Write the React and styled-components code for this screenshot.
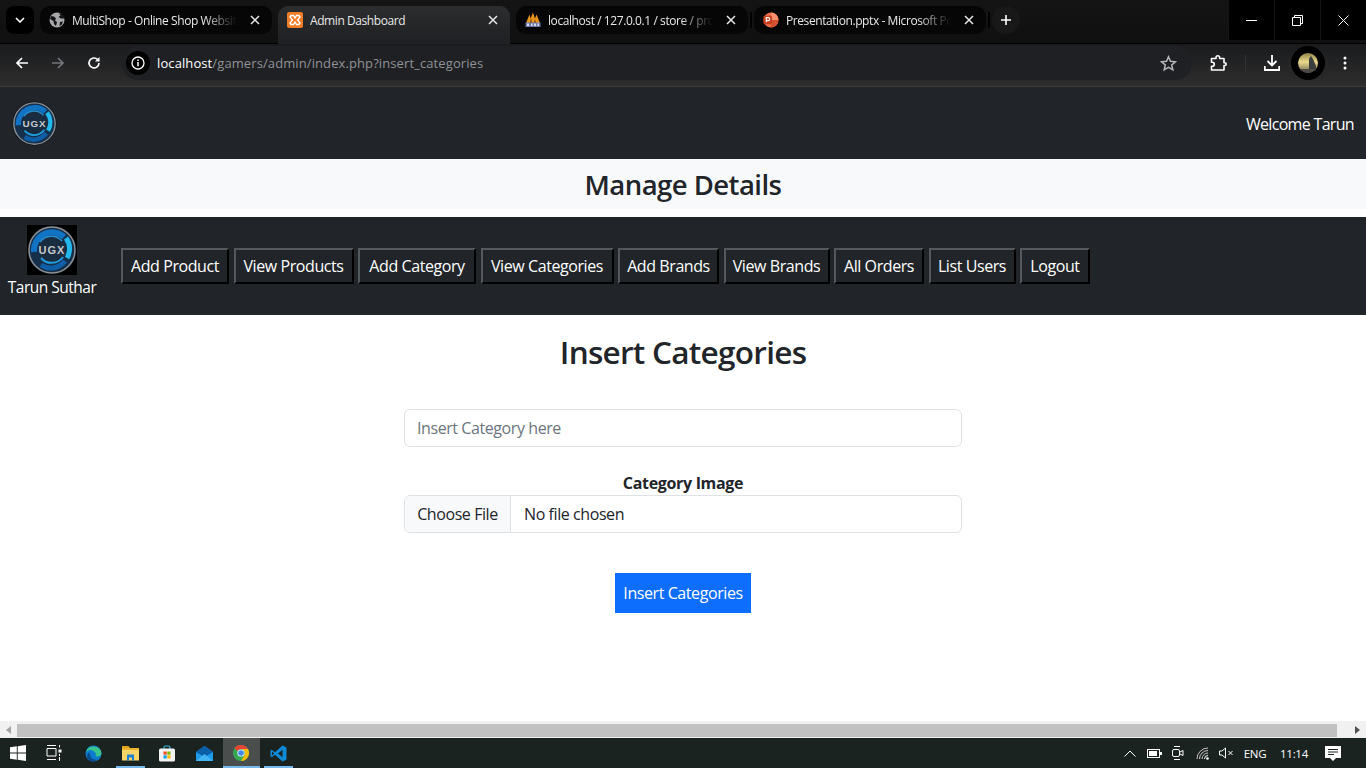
import React from "react";
import styled, { createGlobalStyle } from "styled-components";

const GlobalStyle = createGlobalStyle`
  html, body {
    margin: 0;
    height: 100%;
    overflow: hidden;
    font-family: "Open Sans", "Noto Sans", "Liberation Sans", sans-serif;
  }
  * { box-sizing: border-box; }
`;

const Screen = styled.div`
  display: flex;
  flex-direction: column;
  width: 1366px;
  height: 768px;
  background: #fff;
`;

// browser chrome
const TabStrip = styled.div`
  display: flex;
  align-items: flex-start;
  height: 44px;
  background: linear-gradient(#141414, #101010);
  border-bottom: 1px solid #000;
  color: #e6e6e6;
`;

const TabMenu = styled.div`
  display: flex;
  align-items: center;
  justify-content: center;
  width: 28px;
  height: 28px;
  margin: 6px 0 0 6px;
  border-radius: 8px;
  background: #000;
`;

const Tabs = styled.div`
  display: flex;
  gap: 6px;
  margin: 6px 0 0 6px;
`;

const Tab = styled.div`
  position: relative;
  display: flex;
  align-items: center;
  gap: 7px;
  width: 232px;
  height: ${({ $active }) => ($active ? "38px" : "28px")};
  padding: ${({ $active }) => ($active ? "0 12px 10px 9px" : "0 12px 0 9px")};
  border-radius: ${({ $active }) => ($active ? "10px 10px 0 0" : "10px")};
  background: ${({ $active }) =>
    $active ? "linear-gradient(#2c2d2e, #1f2023)" : "#060606"};

  &::after {
    content: "";
    display: ${({ $divider }) => ($divider ? "block" : "none")};
    position: absolute;
    right: -4px;
    top: 6px;
    width: 2px;
    height: 16px;
    background: #000;
  }
`;

const TabTitle = styled.span`
  flex: 1;
  overflow: hidden;
  margin-right: ${({ $active }) => ($active ? 0 : "6px")};
  white-space: nowrap;
  font-size: 12px;
  letter-spacing: -0.42px;
  color: #e8e8e8;
  mask-image: ${({ $active }) =>
    $active ? "none" : "linear-gradient(90deg, #000 80%, transparent 100%)"};
`;

const NewTab = styled.div`
  display: flex;
  align-items: center;
  justify-content: center;
  width: 28px;
  height: 28px;
  margin: 6px 0 0 6px;
  border-radius: 50%;
  background: #181818;
`;

const WindowButtons = styled.div`
  display: flex;
  height: 40px;
  margin-left: auto;
  background: #000;
`;

const WindowButton = styled.div`
  display: flex;
  align-items: center;
  justify-content: center;
  width: 46px;
  border-left: 1px solid #141414;
`;

const Toolbar = styled.div`
  display: flex;
  align-items: flex-start;
  height: 43px;
  padding-top: 2px;
  background: linear-gradient(#1a1b1d, #2d2d2d);
  border-bottom: 1px solid #3a3a3a;
`;

const NavIcons = styled.div`
  display: flex;
  align-items: center;
  gap: 22px;
  height: 34px;
  margin: 0 20px 0 15px;
`;

const AddressBar = styled.div`
  display: flex;
  align-items: center;
  width: 1071px;
  height: 34px;
  padding: 0 15px 0 5px;
  border-radius: 17px;
  background: #1f2023;
`;

const InfoBadge = styled.div`
  display: flex;
  align-items: center;
  justify-content: center;
  width: 24px;
  height: 24px;
  margin-right: 7px;
  border-radius: 50%;
  background: #000;
`;

const Url = styled.div`
  flex: 1;
  font-size: 13px;
  letter-spacing: 0.1px;
  color: #8f9297;

  b {
    font-weight: 400;
    color: #fff;
  }
`;

const ToolbarRight = styled.div`
  display: flex;
  align-items: center;
  height: 34px;
  margin-left: 17px;
`;

const Avatar = styled.div`
  display: flex;
  align-items: center;
  justify-content: center;
  width: 34px;
  height: 34px;
  margin: 0 18px 0 11px;
  border-radius: 50%;
  background: #000;
`;

const ToolbarDivider = styled.div`
  width: 1px;
  height: 16px;
  margin: 0 18px;
  background: #333;
`;

// page
const Page = styled.main`
  flex: 1;
  overflow: hidden;
`;

const TopBar = styled.header`
  display: flex;
  align-items: center;
  justify-content: space-between;
  height: 72px;
  padding: 0 12px;
  background: #212529;
  color: #fff;
  font-size: 16px;
`;

const Welcome = styled.span`
  margin-top: 2px;
  letter-spacing: -0.68px;
`;

const ManageBand = styled.div`
  height: 50px;
  margin-bottom: 8px;
  background: #f8f9fa;
  color: #212529;
  font-size: 27.5px;
  font-weight: 600;
  line-height: 52px;
  letter-spacing: -0.54px;
  text-align: center;
`;

const AdminNav = styled.nav`
  display: flex;
  align-items: center;
  height: 98px;
  padding: 0 0 0 8px;
  background: #212529;
  color: #fff;
`;

const Profile = styled.div`
  display: flex;
  flex-direction: column;
  align-items: center;
  align-self: flex-start;
  width: 88px;
  margin-right: 25px;
  padding-top: 8px;
  font-size: 15.5px;
  line-height: 22px;
  letter-spacing: -0.5px;
  white-space: nowrap;
`;

const ProfileImage = styled.div`
  width: 50px;
  height: 50px;
  margin-bottom: 1px;
  background: #000;
`;

const NavButtons = styled.div`
  display: flex;
  gap: 4.5px;
`;

const NavButton = styled.button`
  width: ${({ $width }) => $width}px;
  height: 36px;
  padding: 0;
  border: 2px solid;
  border-color: #55585c #000 #000 #55585c;
  background: #212529;
  color: #fff;
  font: inherit;
  font-size: 16px;
  letter-spacing: -0.42px;
`;

const Content = styled.section`
  display: flex;
  flex-direction: column;
  align-items: center;
  color: #212529;
`;

const Heading = styled.h2`
  margin: 16px 0 36px;
  font-size: 31.5px;
  font-weight: 600;
  line-height: 42px;
  letter-spacing: -0.72px;
`;

const Form = styled.form`
  display: flex;
  flex-direction: column;
  align-items: center;
  width: 558px;
`;

const TextInput = styled.input`
  width: 100%;
  height: 38px;
  margin-bottom: 25px;
  padding: 0 12px;
  border: 1px solid #dee2e6;
  border-radius: 6px;
  font: inherit;
  font-size: 16px;
  letter-spacing: -0.42px;

  &::placeholder {
    color: #6c757d;
    opacity: 1;
  }
`;

const Label = styled.label`
  font-size: 16px;
  font-weight: 700;
  line-height: 23px;
  letter-spacing: -0.32px;
`;

const FileRow = styled.div`
  display: flex;
  align-items: stretch;
  width: 100%;
  height: 38px;
  margin-bottom: 40px;
  border: 1px solid #dee2e6;
  border-radius: 6px;
  overflow: hidden;
  font-size: 16px;
  letter-spacing: -0.42px;
`;

const FileButton = styled.div`
  display: flex;
  align-items: center;
  justify-content: center;
  width: 106px;
  border-right: 1px solid #dee2e6;
  background: #f8f9fa;
`;

const FileName = styled.div`
  display: flex;
  align-items: center;
  padding-left: 13px;
`;

const SubmitButton = styled.button`
  width: 136px;
  height: 40px;
  padding: 0;
  border: 0;
  background: #0d6efd;
  color: #fff;
  font: inherit;
  font-size: 16px;
  letter-spacing: -0.42px;
`;

// scrollbar + taskbar
const ScrollBar = styled.div`
  display: flex;
  align-items: center;
  height: 17px;
  padding-top: 1px;
  background: #f1f1f1;
`;

const ScrollArrow = styled.div`
  display: flex;
  align-items: center;
  justify-content: center;
  flex: 0 0 17px;
`;

const ScrollThumb = styled.div`
  width: 1320px;
  height: 13px;
  background: #c1c1c1;
`;

const ScrollTrack = styled.div`
  flex: 1;
`;

const Taskbar = styled.footer`
  display: flex;
  align-items: center;
  height: 30px;
  background: #1b2321;
  color: #fff;
`;

const TaskItem = styled.div`
  position: relative;
  display: flex;
  align-items: center;
  justify-content: center;
  width: ${({ $width }) => $width || 37}px;
  height: 30px;
  background: ${({ $active }) => ($active ? "#4a4f4e" : "transparent")};

  &::after {
    content: "";
    display: ${({ $open }) => ($open ? "block" : "none")};
    position: absolute;
    left: ${({ $active }) => ($active ? 0 : "4px")};
    right: ${({ $active }) => ($active ? 0 : "4px")};
    bottom: 0;
    height: 2px;
    background: #76b9ed;
  }
`;

const Tray = styled.div`
  display: flex;
  align-items: center;
  margin-left: auto;
  height: 30px;
`;

const TrayIcon = styled.div`
  display: flex;
  align-items: center;
  justify-content: center;
  width: ${({ $width }) => $width || 24}px;
`;

const TrayText = styled.span`
  width: ${({ $width }) => $width}px;
  font-size: 11.5px;
  letter-spacing: -0.3px;
  text-align: center;
  color: #fff;
`;

const CloseIcon = () => (
  <svg width="10" height="10" viewBox="0 0 10 10">
    <path d="M1 1l8 8M9 1l-8 8" stroke="#e8e8e8" strokeWidth="1.5" />
  </svg>
);

const GlobeIcon = () => (
  <svg width="16" height="16" viewBox="0 0 16 16">
    <circle cx="8" cy="8" r="7.5" fill="#a6a8ab" />
    <path d="M2 4l3 .5 2 2-1 2 2 1.5-1 4-2-2-.5-3L1 7zM10 1.5l1.5 2-2 1.5 2.5 1.5 3 0 .5-2-2.5-3zM11 10l3-.5-1.5 3.5-2 1z" fill="#141414" />
  </svg>
);

const XamppIcon = () => (
  <svg width="16" height="16" viewBox="0 0 16 16">
    <rect width="16" height="16" rx="2" fill="#f07c26" />
    <path d="M4 3.500h2.500L8 6l1.500-2.500H12l1 1.500-2.500 3 2.500 3-1 1.500H9.500L8 10l-1.500 2.500H4L3 11l2.500-3L3 5z" fill="none" stroke="#fff" strokeWidth="1.400" />
  </svg>
);

const PmaIcon = () => (
  <svg width="16" height="16" viewBox="0 0 16 16">
    <path d="M1 11L4.500 2.500l1 4L8 .5l2 6 1.500-4L15 11z" fill="#e8931c" />
    <path d="M5 11l1-5 1 5zM9 11l1-4 1 4z" fill="#7a3f08" />
    <rect x="0.500" y="10.500" width="15" height="4.500" fill="#6c78ab" />
    <path d="M2 11.500h2v2.500H2zM6 11.500h1.500V14H6zM9 11.500h2V14H9zM12.500 11.500H14V14h-1.500z" fill="#d8dcec" />
  </svg>
);

const PptIcon = () => (
  <svg width="16" height="16" viewBox="0 0 17 17">
    <circle cx="8.500" cy="8.500" r="8" fill="#ed6c47" />
    <path d="M8.500.5a8 8 0 0 1 8 8h-8z" fill="#ff8f6b" />
    <path d="M8.500 16.500a8 8 0 0 0 8-8h-8z" fill="#d35230" />
    <rect x="0.500" y="4" width="9" height="9" rx="1" fill="#c43e1c" />
    <path d="M3.500 11V6h2a1.500 1.500 0 0 1 0 3.200h-2" fill="none" stroke="#fff" strokeWidth="1.200" />
  </svg>
);

const BackIcon = ({ color = "#fff", flip }) => (
  <svg width="14" height="14" viewBox="0 0 14 14" style={flip ? { transform: "scaleX(-1)" } : undefined}>
    <path d="M13 7H2M7 2L2 7l5 5" fill="none" stroke={color} strokeWidth="1.700" />
  </svg>
);

const ReloadIcon = () => (
  <svg width="14" height="14" viewBox="0 0 14 14">
    <path d="M12 7a5 5 0 1 1-1.500-3.600L12 5" fill="none" stroke="#fff" strokeWidth="1.600" />
    <path d="M12.500 1v4.500H8z" fill="#fff" />
  </svg>
);

const InfoIcon = () => (
  <svg width="14" height="14" viewBox="0 0 14 14">
    <circle cx="7" cy="7" r="6" fill="none" stroke="#fff" strokeWidth="1.300" />
    <path d="M7 6v4.200M7 3.500v1.500" stroke="#fff" strokeWidth="1.500" />
  </svg>
);

const StarIcon = () => (
  <svg width="17" height="17" viewBox="0 0 17 17">
    <path d="M8.500 1.800l2 4.500 4.900.5-3.700 3.200 1.100 4.800-4.300-2.500-4.300 2.500 1.100-4.800L1.600 6.800l4.900-.5z" fill="none" stroke="#b5b7ba" strokeWidth="1.500" />
  </svg>
);

const ExtensionIcon = () => (
  <svg width="18" height="18" viewBox="0 0 18 18">
    <path d="M2.500 4.500H7V3.500a1.800 1.800 0 0 1 3.600 0v1h4.400v4.200h.8a1.400 1.400 0 0 1 0 2.800H15v4.500H2.500v-3.700h.8a2 2 0 0 0 0-4h-.8z" fill="none" stroke="#fff" strokeWidth="1.600" strokeLinejoin="round" />
  </svg>
);

const DownloadIcon = () => (
  <svg width="16" height="16" viewBox="0 0 16 16">
    <path d="M8 0v10M3.500 6L8 10.500 12.500 6M.8 11v4h14.400v-4" fill="none" stroke="#fff" strokeWidth="1.800" />
  </svg>
);

const DotsIcon = () => (
  <svg width="4" height="14" viewBox="0 0 4 14">
    <circle cx="2" cy="2" r="1.500" fill="#fff" />
    <circle cx="2" cy="7" r="1.500" fill="#fff" />
    <circle cx="2" cy="12" r="1.500" fill="#fff" />
  </svg>
);

const AvatarPhoto = () => (
  <svg width="20" height="20" viewBox="0 0 20 20">
    <defs>
      <linearGradient id="avatarSky" x1="0" y1="0" x2="0" y2="1">
        <stop offset="0" stopColor="#8f8346" />
        <stop offset="0.45" stopColor="#ead98c" />
        <stop offset="1" stopColor="#6a6350" />
      </linearGradient>
      <clipPath id="avatarClip">
        <circle cx="10" cy="10" r="10" />
      </clipPath>
    </defs>
    <g clipPath="url(#avatarClip)">
      <rect width="20" height="20" fill="url(#avatarSky)" />
      <path d="M11 20V6l2-3 2 3 3 7v7z" fill="#3a3d3e" />
      <rect y="16" width="20" height="4" fill="#4b4a45" />
    </g>
  </svg>
);

const UgxLogo = ({ size }) => (
  <svg width={size} height={size} viewBox="0 0 50 50" style={{ display: "block" }}>
    <circle cx="25" cy="25" r="24.500" fill="#0d1116" />
    <circle cx="25" cy="25" r="23" fill="#16304c" stroke="#8b9197" strokeWidth="1.500" />
    <path d="M7 27A18 18 0 0 1 37 12" fill="none" stroke="#1173c4" strokeWidth="6" />
    <path d="M39 13a18 18 0 0 1 1 20" fill="none" stroke="#22b8ec" strokeWidth="5" />
    <path d="M38 36a18 18 0 0 1-24 4" fill="none" stroke="#0f5fa8" strokeWidth="5" />
    <circle cx="25" cy="25" r="14" fill="#1a2c40" />
    <path d="M14 33a14 14 0 0 0 22-1" fill="none" stroke="#1f9fe0" strokeWidth="2" />
    <path d="M13 17a14 14 0 0 1 22-1" fill="none" stroke="#2a8fd0" strokeWidth="1.500" />
    <text x="25" y="29" textAnchor="middle" fontFamily="Liberation Sans" fontSize="11" fontWeight="700" letterSpacing="1" fill="#c4c8cb">UGX</text>
  </svg>
);

const WindowsIcon = () => (
  <svg width="16" height="16" viewBox="0 0 16 16">
    <path d="M0 2.300L6.800 1.300V7.500H0zM7.700 1.200L16 0V7.500H7.700zM0 8.400H6.800V14.700L0 13.700zM7.700 8.400H16V16L7.700 14.800z" fill="#fff" />
  </svg>
);

const TaskViewIcon = () => (
  <svg width="16" height="16" viewBox="0 0 16 16" style={{ marginRight: 3 }}>
    <path d="M1 .5h9M1 3.500h9V11H1zM1 14.500h9M13.500 0v2.500M13.500 12v4" fill="none" stroke="#fff" />
    <rect x="12.500" y="4.500" width="3" height="3" fill="#fff" />
    <path d="M13.500 9v2" stroke="#fff" />
  </svg>
);

const EdgeIcon = () => (
  <svg width="17" height="17" viewBox="0 0 17 17">
    <circle cx="8.500" cy="8.500" r="8" fill="#0c7bd0" />
    <path d="M1 7a8 8 0 0 1 15.500 1.500c0 2-2 3-4 3-2.500 0-2-1.500-1.500-2.500C10 6 6 4 3.500 5.500 2.200 6.300 1.500 6.500 1 7z" fill="#37c38a" />
    <path d="M5 9c0 4 4 6.500 8 5.500-2 2-6 2.500-8.500 1C2 14 1.500 11 2.500 8.500 3 7.500 5 7.500 5 9z" fill="#0a4d8f" />
  </svg>
);

const FolderIcon = () => (
  <svg width="17" height="16" viewBox="0 0 17 16">
    <path d="M0 1h6.500l1.500 2h-8z" fill="#e3a21a" />
    <rect y="3" width="17" height="12.500" fill="#f8d568" />
    <rect y="3" width="17" height="2" fill="#eeb62f" />
    <path d="M5 15.500V9.500h7v6h-2v-3H7v3z" fill="#1f7fd0" />
  </svg>
);

const StoreIcon = () => (
  <svg width="16" height="17" viewBox="0 0 16 17">
    <path d="M5 4V2.500a1.500 1.500 0 0 1 1.500-1.500h3A1.500 1.500 0 0 1 11 2.500V4" fill="none" stroke="#35b8d6" strokeWidth="1.200" />
    <rect y="3.500" width="16" height="13" rx="1.500" fill="#f3f3f3" />
    <rect x="4.500" y="6.500" width="3.200" height="3.200" fill="#f25022" />
    <rect x="8.300" y="6.500" width="3.200" height="3.200" fill="#7fba00" />
    <rect x="4.500" y="10.300" width="3.200" height="3.200" fill="#00a4ef" />
    <rect x="8.300" y="10.300" width="3.200" height="3.200" fill="#ffb900" />
  </svg>
);

const MailIcon = () => (
  <svg width="17" height="15" viewBox="0 0 17 15">
    <path d="M0 6L8.500 0 17 6v9H0z" fill="#1c9be8" />
    <path d="M0 6L8.500 0 17 6l-8.500 5z" fill="#0a5ea8" />
    <path d="M0 15l8.500-7 8.500 7z" fill="#45b4f2" />
  </svg>
);

const ChromeIcon = () => (
  <svg width="16" height="16" viewBox="0 0 16 16">
    <circle cx="8" cy="8" r="8" fill="#34a853" />
    <path d="M8 0a8 8 0 0 1 6.930 4H8a4 4 0 0 0-3.460 2L1.500 3.300A8 8 0 0 1 8 0z" fill="#ea4335" />
    <path d="M14.930 4A8 8 0 0 1 8 16l3.460-6A4 4 0 0 0 8 4z" fill="#fbbc04" />
    <circle cx="8" cy="8" r="3.600" fill="#fff" />
    <circle cx="8" cy="8" r="2.800" fill="#4285f4" />
  </svg>
);

const VsCodeIcon = () => (
  <svg width="17" height="17" viewBox="0 0 17 17">
    <path d="M12.500.5L16.500 2.500v12l-4 2L5 9.800 1.800 12.300.5 11.500V5.500l1.300-.8L5 7.200z" fill="#0e8ad6" />
    <path d="M12.500 4.800L8 8.500l4.500 3.700z" fill="#1b2321" />
    <path d="M2 6.500l2 2-2 2z" fill="#1b2321" />
  </svg>
);

const TrayChevron = () => (
  <svg width="12" height="7" viewBox="0 0 12 7">
    <path d="M.5 6.500L6 1l5.500 5.500" fill="none" stroke="#fff" />
  </svg>
);

const BatteryIcon = () => (
  <svg width="15" height="9" viewBox="0 0 15 9">
    <rect x="0.500" y="0.500" width="12" height="8" fill="none" stroke="#fff" />
    <rect x="2" y="2" width="8" height="5" fill="#fff" />
    <rect x="13" y="3" width="2" height="3" fill="#fff" />
  </svg>
);

const MeetIcon = () => (
  <svg width="12" height="16" viewBox="0 0 12 16">
    <path d="M2 1.500h6M2 14.500h6" stroke="#fff" />
    <rect x="0.500" y="4.500" width="7" height="7" rx="1.500" fill="none" stroke="#fff" />
    <path d="M8 7l3-1.500v5L8 9" fill="none" stroke="#fff" />
  </svg>
);

const WifiIcon = () => (
  <svg width="14" height="13" viewBox="0 0 14 13">
    <path d="M1 12a11 11 0 0 1 11-11M3.500 12A8.500 8.500 0 0 1 12 3.500M6 12a6 6 0 0 1 6-6" fill="none" stroke="#c8c8c8" />
    <path d="M8.500 12A3.500 3.500 0 0 1 12 8.500" fill="none" stroke="#fff" />
    <circle cx="11.500" cy="11.500" r="1.300" fill="#fff" />
  </svg>
);

const MuteIcon = () => (
  <svg width="15" height="12" viewBox="0 0 15 12">
    <path d="M.5 4v4h2.500L6.500 11V1L3 4z" fill="none" stroke="#fff" />
    <path d="M9.500 4l4 4M13.500 4l-4 4" stroke="#fff" />
  </svg>
);

const NotifyIcon = () => (
  <svg width="16" height="15" viewBox="0 0 16 15">
    <path d="M0 0h16v12h-5l-3 3-3-3H0z" fill="#fff" />
    <path d="M3 3.500h10M3 6h10M3 8.500h6" stroke="#1b2321" />
  </svg>
);

const browserTabs = [
  { title: "MultiShop - Online Shop Website", icon: <GlobeIcon /> },
  { title: "Admin Dashboard", icon: <XamppIcon />, active: true },
  { title: "localhost / 127.0.0.1 / store / products", icon: <PmaIcon />, divider: true },
  { title: "Presentation.pptx - Microsoft PowerPoint", icon: <PptIcon />, divider: true },
];

const navLinks = [
  ["Add Product", 108],
  ["View Products", 120],
  ["Add Category", 118],
  ["View Categories", 133],
  ["Add Brands", 101],
  ["View Brands", 106],
  ["All Orders", 90],
  ["List Users", 87],
  ["Logout", 70],
];

const taskItems = [
  { icon: <EdgeIcon /> },
  { icon: <FolderIcon />, open: true },
  { icon: <StoreIcon /> },
  { icon: <MailIcon /> },
  { icon: <ChromeIcon />, open: true, active: true },
  { icon: <VsCodeIcon />, open: true },
];

function App() {
  return (
    <Screen>
      <GlobalStyle />
      <TabStrip>
        <TabMenu>
          <svg width="10" height="6" viewBox="0 0 10 6">
            <path d="M1 1l4 4 4-4" fill="none" stroke="#fff" strokeWidth="1.600" />
          </svg>
        </TabMenu>
        <Tabs>
          {browserTabs.map((tab) => (
            <Tab key={tab.title} $active={tab.active} $divider={tab.divider}>
              {tab.icon}
              <TabTitle $active={tab.active}>{tab.title}</TabTitle>
              <CloseIcon />
            </Tab>
          ))}
        </Tabs>
        <NewTab>
          <svg width="12" height="12" viewBox="0 0 12 12">
            <path d="M6 1v10M1 6h10" stroke="#fff" strokeWidth="1.600" />
          </svg>
        </NewTab>
        <WindowButtons>
          <WindowButton>
            <svg width="11" height="1" viewBox="0 0 11 1">
              <path d="M0 .5h11" stroke="#fff" />
            </svg>
          </WindowButton>
          <WindowButton>
            <svg width="11" height="11" viewBox="0 0 11 11">
              <path d="M.5 2.500h8v8h-8zM2.500 2.500v-2h8v8h-2" fill="none" stroke="#fff" />
            </svg>
          </WindowButton>
          <WindowButton>
            <svg width="11" height="11" viewBox="0 0 11 11">
              <path d="M.5.5l10 10M10.500.5l-10 10" stroke="#fff" />
            </svg>
          </WindowButton>
        </WindowButtons>
      </TabStrip>

      <Toolbar>
        <NavIcons>
          <BackIcon />
          <BackIcon color="#73757a" flip />
          <ReloadIcon />
        </NavIcons>
        <AddressBar>
          <InfoBadge>
            <InfoIcon />
          </InfoBadge>
          <Url>
            <b>localhost</b>/gamers/admin/index.php?insert_categories
          </Url>
          <StarIcon />
        </AddressBar>
        <ToolbarRight>
          <ExtensionIcon />
          <ToolbarDivider />
          <DownloadIcon />
          <Avatar>
            <AvatarPhoto />
          </Avatar>
          <DotsIcon />
        </ToolbarRight>
      </Toolbar>

      <Page>
        <TopBar>
          <UgxLogo size={45} />
          <Welcome>Welcome Tarun</Welcome>
        </TopBar>
        <ManageBand>Manage Details</ManageBand>
        <AdminNav>
          <Profile>
            <ProfileImage>
              <UgxLogo size={50} />
            </ProfileImage>
            Tarun Suthar
          </Profile>
          <NavButtons>
            {navLinks.map(([label, width]) => (
              <NavButton key={label} $width={width}>
                {label}
              </NavButton>
            ))}
          </NavButtons>
        </AdminNav>
        <Content>
          <Heading>Insert Categories</Heading>
          <Form>
            <TextInput placeholder="Insert Category here" />
            <Label>Category Image</Label>
            <FileRow>
              <FileButton>Choose File</FileButton>
              <FileName>No file chosen</FileName>
            </FileRow>
            <SubmitButton type="button">Insert Categories</SubmitButton>
          </Form>
        </Content>
      </Page>

      <ScrollBar>
        <ScrollArrow>
          <svg width="5" height="8" viewBox="0 0 5 8">
            <path d="M5 0v8L0 4z" fill="#a3a3a3" />
          </svg>
        </ScrollArrow>
        <ScrollThumb />
        <ScrollTrack />
        <ScrollArrow>
          <svg width="5" height="8" viewBox="0 0 5 8">
            <path d="M0 0v8l5-4z" fill="#505050" />
          </svg>
        </ScrollArrow>
      </ScrollBar>

      <Taskbar>
        <TaskItem $width={36}>
          <WindowsIcon />
        </TaskItem>
        <TaskItem $width={38.5}>
          <TaskViewIcon />
        </TaskItem>
        {taskItems.map((item, index) => (
          <TaskItem key={index} $open={item.open} $active={item.active}>
            {item.icon}
          </TaskItem>
        ))}
        <Tray>
          <TrayIcon>
            <TrayChevron />
          </TrayIcon>
          <TrayIcon>
            <BatteryIcon />
          </TrayIcon>
          <TrayIcon>
            <MeetIcon />
          </TrayIcon>
          <TrayIcon $width={26}>
            <WifiIcon />
          </TrayIcon>
          <TrayIcon $width={20}>
            <MuteIcon />
          </TrayIcon>
          <TrayText $width={38}>ENG</TrayText>
          <TrayText $width={40}>11:14</TrayText>
          <TrayIcon $width={38}>
            <NotifyIcon />
          </TrayIcon>
          <TrayIcon $width={14} />
        </Tray>
      </Taskbar>
    </Screen>
  );
}

export default App;
